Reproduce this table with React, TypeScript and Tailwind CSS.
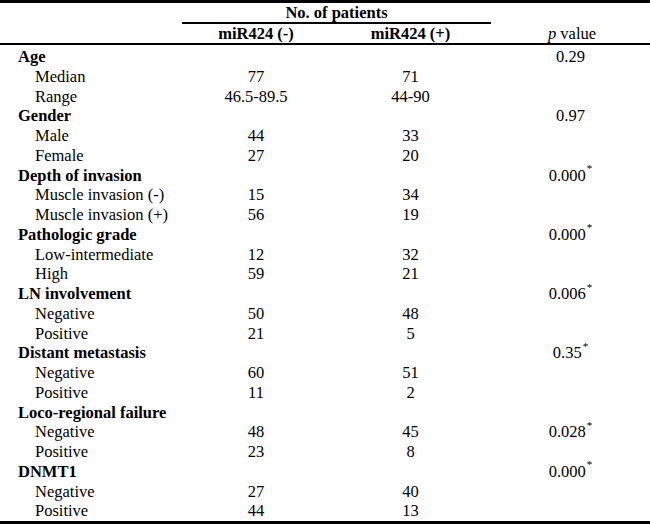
type Row = {
  label: string;
  head?: boolean;
  neg?: string;
  pos?: string;
  p?: string;
  star?: boolean;
};

const rows: Row[] = [
  { label: "Age", head: true, p: "0.29" },
  { label: "Median", neg: "77", pos: "71" },
  { label: "Range", neg: "46.5-89.5", pos: "44-90" },
  { label: "Gender", head: true, p: "0.97" },
  { label: "Male", neg: "44", pos: "33" },
  { label: "Female", neg: "27", pos: "20" },
  { label: "Depth of invasion", head: true, p: "0.000", star: true },
  { label: "Muscle invasion (-)", neg: "15", pos: "34" },
  { label: "Muscle invasion (+)", neg: "56", pos: "19" },
  { label: "Pathologic grade", head: true, p: "0.000", star: true },
  { label: "Low-intermediate", neg: "12", pos: "32" },
  { label: "High", neg: "59", pos: "21" },
  { label: "LN involvement", head: true, p: "0.006", star: true },
  { label: "Negative", neg: "50", pos: "48" },
  { label: "Positive", neg: "21", pos: "5" },
  { label: "Distant metastasis", head: true, p: "0.35", star: true },
  { label: "Negative", neg: "60", pos: "51" },
  { label: "Positive", neg: "11", pos: "2" },
  { label: "Loco-regional failure", head: true },
  { label: "Negative", neg: "48", pos: "45", p: "0.028", star: true },
  { label: "Positive", neg: "23", pos: "8" },
  { label: "DNMT1", head: true, p: "0.000", star: true },
  { label: "Negative", neg: "27", pos: "40" },
  { label: "Positive", neg: "44", pos: "13" },
];

const cols = "grid grid-cols-[182px_148px_161px_159px]";

export default function App() {
  return (
    <div className="w-[650px] h-[524px] bg-white text-black font-[Liberation_Serif] text-[16.5px]">
      {/* header */}
      <div className="border-t-[3px] border-b-2 border-black">
        <div className={`${cols} h-[21px]`}>
          <div />
          <div className="col-span-2 border-b-2 border-black text-center font-bold leading-[19px]">
            No. of patients
          </div>
          <div />
        </div>
        <div className={`${cols} h-[19px] leading-[19px] text-center`}>
          <div />
          <div className="font-bold">miR424 (-)</div>
          <div className="font-bold">miR424 (+)</div>
          <div className="pl-[3px]">
            <span className="italic">p</span> value
          </div>
        </div>
      </div>

      {/* body */}
      <div className="pt-[2px] border-b-[3px] border-black">
        {rows.map((r, i) => (
          <div key={i} className={`${cols} h-[19.75px] leading-[19.75px]`}>
            <div className={r.head ? "pl-[18px] font-bold whitespace-nowrap" : "pl-[35px] whitespace-nowrap"}>
              {r.label}
            </div>
            <div className="text-center">{r.neg}</div>
            <div className="text-center">{r.pos}</div>
            <div className="text-center">
              {r.p}
              {r.star && <sup className="text-[11px] leading-none align-[3px] ml-[1px]">*</sup>}
            </div>
          </div>
        ))}
      </div>
    </div>
  );
}
